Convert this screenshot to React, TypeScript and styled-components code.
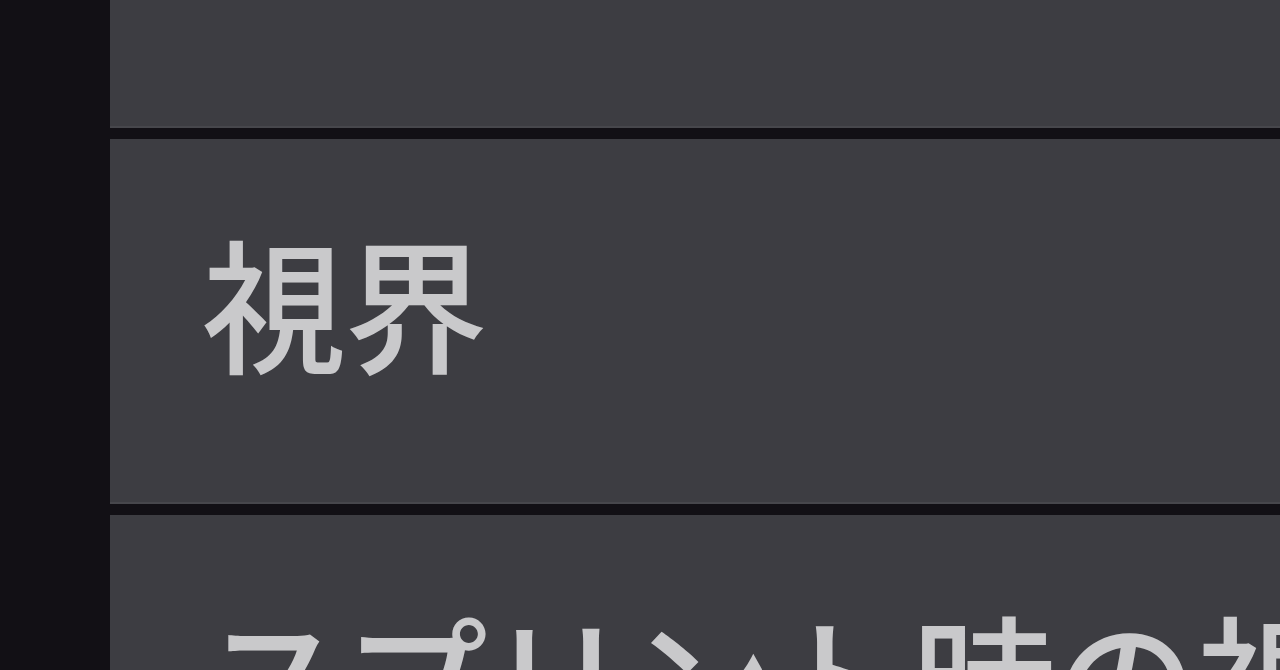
import React from 'react';
import styled, { createGlobalStyle } from 'styled-components';

const GlobalStyle = createGlobalStyle`
  html, body {
    margin: 0;
    padding: 0;
    background-color: #121015;
    overflow: hidden;
  }
`;

const Screen = styled.div`
  display: flex;
  width: 1280px;
  height: 670px;
  overflow: hidden;
  background-color: #121015;
  font-family: 'Noto Sans CJK JP', 'Noto Sans', sans-serif;
`;

const SideStrip = styled.div`
  flex: 0 0 110px;
  background-color: #121015;
`;

const MenuViewport = styled.div`
  flex: 1;
  overflow: hidden;
`;

const MenuList = styled.div<{ scroll: number }>`
  display: flex;
  flex-direction: column;
  gap: 11px;
  margin-top: ${props => -props.scroll}px;
`;

const MenuRow = styled.div`
  height: 365px;
  flex-shrink: 0;
  display: flex;
  align-items: center;
  padding: 0 0 42px 92px;
  background-color: #3d3d42;
  border-bottom: 2px solid #47474c;
  box-sizing: border-box;
  white-space: nowrap;
  overflow: hidden;
`;

const Label = styled.span`
  color: #c9c9cb;
  font-size: 144px;
  font-weight: 500;
  line-height: 1;
  letter-spacing: -2px;
`;

const items = ['感度', '視界', 'スプリント時の視野効果'];

const App: React.FC = () => {
  return (
    <>
      <GlobalStyle />
      <Screen>
        <SideStrip />
        <MenuViewport>
          <MenuList scroll={237}>
            {items.map(label => (
              <MenuRow key={label}>
                <Label>{label}</Label>
              </MenuRow>
            ))}
          </MenuList>
        </MenuViewport>
      </Screen>
    </>
  );
};

export default App;
